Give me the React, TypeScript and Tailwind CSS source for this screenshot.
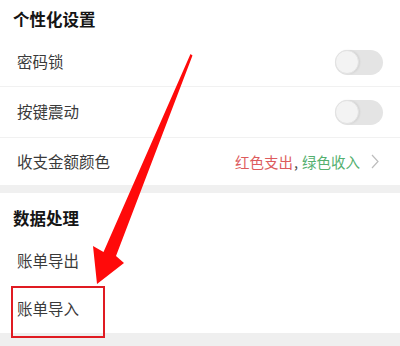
import type { ReactNode } from "react";

// Settings list with a red annotation arrow pointing at "账单导入".

const FONT = { fontFamily: '"Noto Sans CJK SC", "Noto Sans", sans-serif' };

function Toggle() {
  return (
    <span className="relative flex h-[25px] w-[48px] items-center rounded-full bg-[#e4e4e4]">
      <span className="h-[24px] w-[24px] rounded-full border border-[#e2e2e2] bg-[#f3f3f3] shadow-[1px_0_2px_rgba(0,0,0,0.08)]" />
    </span>
  );
}

function Row({ label, right, divider = true }: { label: string; right?: ReactNode; divider?: boolean }) {
  return (
    <div className={`flex h-[51px] items-center justify-between pl-[17px] pr-[17px] ${divider ? "border-b border-[#f1f1f1]" : ""}`}>
      <span className="text-[15.5px] text-[#3a3a3a]">{label}</span>
      {right}
    </div>
  );
}

function Chevron() {
  return (
    <svg width="8" height="15" viewBox="0 0 8 15" className="ml-[11px]">
      <path d="M1 1 L7 7.5 L1 14" fill="none" stroke="#bdbdbd" strokeWidth="1.2" />
    </svg>
  );
}

export default function App() {
  return (
    <div className="relative h-[346px] w-[400px] overflow-hidden bg-white" style={FONT}>
      <div className="flex h-[38px] items-end pb-[6px] pl-[13px]">
        <span className="text-[16.5px] font-bold text-[#151515]">个性化设置</span>
      </div>
      <div className="h-[49px] border-b border-[#f1f1f1] flex items-center justify-between pl-[17px] pr-[17px]">
        <span className="text-[15.5px] text-[#3a3a3a]">密码锁</span>
        <Toggle />
      </div>
      <Row label="按键震动" right={<Toggle />} />
      <div className="flex h-[47px] items-center justify-between pl-[17px] pr-[21px]">
        <span className="text-[15.5px] text-[#3a3a3a]">收支金额颜色</span>
        <span className="flex items-center text-[14.5px]">
          <span className="text-[#dd5b5d]">红色支出</span>
          <span className="ml-[1px] mr-[4px] text-[#444]">,</span>
          <span className="text-[#55b06f]">绿色收入</span>
          <Chevron />
        </span>
      </div>
      <div className="h-[8px] bg-[#f0f0f0]" />
      <div className="flex h-[43px] items-end pb-[5px] pl-[13px]">
        <span className="text-[16.5px] font-bold text-[#151515]">数据处理</span>
      </div>
      <div className="flex h-[49px] items-center pl-[17px]">
        <span className="text-[15.5px] text-[#3a3a3a]">账单导出</span>
      </div>
      <div className="flex h-[48px] items-center pl-[17px]">
        <span className="text-[15.5px] text-[#3a3a3a]">账单导入</span>
      </div>
      <div className="h-[13px] bg-[#efefef]" />

      {/* highlight box */}
      <div className="absolute left-[11px] top-[286px] h-[52px] w-[94px] border-2 border-[#e01b22]" />

      {/* annotation arrow */}
      <svg className="absolute left-0 top-0" width="400" height="346" viewBox="0 0 400 346">
        <polygon
          points="190.5,54 192.5,55.5 116,256 124,263 97,284 93,246 103.5,252"
          fill="#ff0a0a"
        />
      </svg>
    </div>
  );
}
